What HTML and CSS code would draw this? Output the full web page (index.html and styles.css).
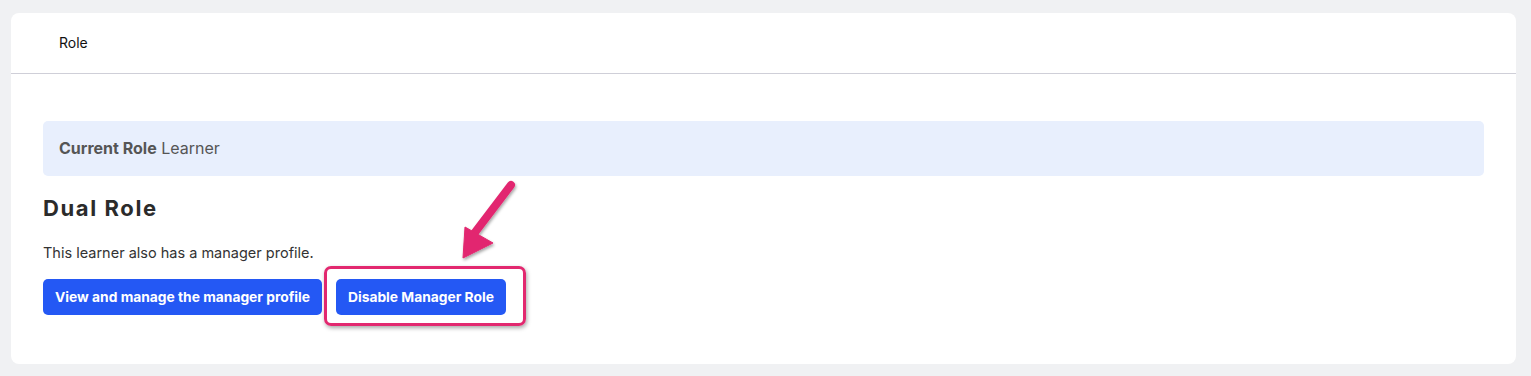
FILE: index.html
```html
<!DOCTYPE html>
<html lang="en">
<head>
    <meta charset="UTF-8">
    <meta name="viewport" content="width=device-width, initial-scale=1.0">
    <title>Role</title>
    <link rel="stylesheet" href="styles.css">
</head>
<body>

<div class="card">
    <div class="card-header">Role</div>

    <div class="card-body">
        <!-- Current role banner -->
        <div class="role-alert"><strong>Current Role</strong> Learner</div>

        <h2 class="section-title">Dual Role</h2>
        <p class="section-text">This learner also has a manager profile.</p>

        <div class="actions">
            <button class="btn">View and manage the manager profile</button>
            <button class="btn">Disable Manager Role</button>
        </div>
    </div>

    <!-- Screenshot annotation -->
    <div class="highlight"></div>
    <svg class="arrow" width="80" height="100" viewBox="0 0 80 100">
        <defs>
            <filter id="shadow" x="-30%" y="-30%" width="160%" height="160%">
                <feDropShadow dx="1" dy="2" stdDeviation="1.5" flood-color="#000" flood-opacity="0.35"/>
            </filter>
        </defs>
        <g filter="url(#shadow)" fill="#e2286f" stroke="#e2286f">
            <line x1="68" y1="12" x2="30" y2="62" stroke-width="8" stroke-linecap="round"/>
            <polygon points="20,85 22,54 50,70" stroke-width="1" stroke-linejoin="round"/>
        </g>
    </svg>
</div>

</body>
</html>
```

FILE: styles.css
```css
body {
    margin: 0;
    background-color: #f0f1f3;
    font-family: Inter, "Liberation Sans", Arial, sans-serif;
    color: #333;
}

/* Main card */
.card {
    position: relative;
    background-color: #ffffff;
    border-radius: 8px;
    margin: 13px 15px 13px 11px;
}

.card-header {
    height: 60px;
    line-height: 60px;
    padding-left: 48px;
    font-size: 14px;
    color: #111;
    border-bottom: 1px solid #cfcfd8;
}

.card-body {
    padding: 47px 32px 49px 32px;
}

.role-alert {
    background-color: #e8effd;
    border-radius: 5px;
    height: 55px;
    line-height: 55px;
    padding: 0 16px;
    font-size: 16px;
    color: #555;
}

.role-alert strong {
    font-weight: 700;
}

.section-title {
    margin: 18px 0 20px 0;
    font-size: 22px;
    line-height: 28px;
    font-weight: 700;
    color: #2b2b2b;
    letter-spacing: 1.6px;
}

.section-text {
    margin: 0;
    font-size: 14.5px;
    line-height: 22px;
    color: #333;
}

.actions {
    display: flex;
    gap: 14px;
    margin-top: 15px;
}

.btn {
    height: 36px;
    padding: 0 12px;
    background-color: #2458f4;
    color: #ffffff;
    font-family: Inter, "Liberation Sans", Arial, sans-serif;
    font-size: 13.8px;
    font-weight: 700;
    border: none;
    border-radius: 5px;
    cursor: pointer;
}

/* Annotation overlay */
.highlight {
    position: absolute;
    left: 313px;
    top: 253px;
    width: 196px;
    height: 54px;
    border: 3px solid #e2286f;
    border-radius: 7px;
    box-shadow: 1px 2px 4px rgba(0, 0, 0, 0.35);
}

.arrow {
    position: absolute;
    left: 432px;
    top: 160px;
}
```
